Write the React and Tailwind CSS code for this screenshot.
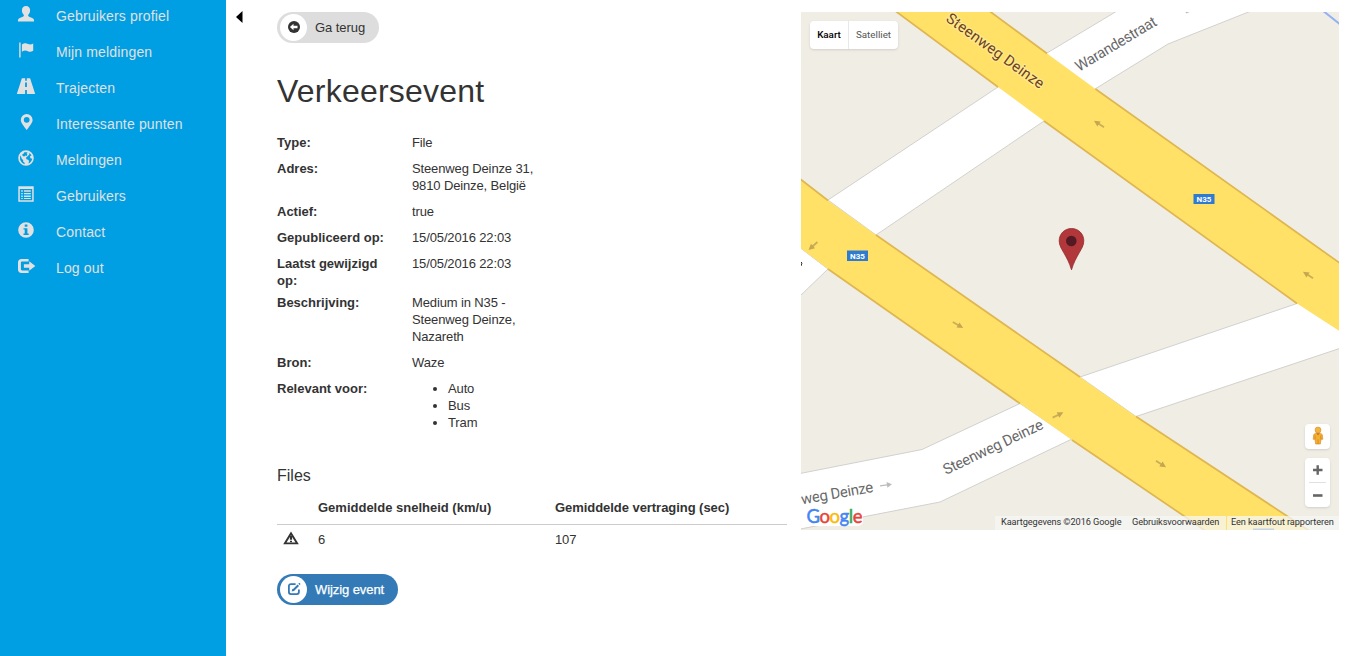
const ICONS = {
  user: (
    <path d="M8 0c2.500 0 4.100 1.700 4.100 4.200 0 1.900-.9 3.600-1.900 4.600v1.300c.2.800 3.900 1.700 4.900 2.500.7.500 1 1.400 1 2.900H-.1c0-1.500.3-2.400 1-2.900 1-.8 4.700-1.700 4.900-2.500V8.800C4.800 7.800 3.900 6.100 3.900 4.200 3.900 1.700 5.500 0 8 0z" />
  ),
  flag: (
    <path d="M1.200.6h1.400v14.800H1.200zM3.900 2.600C6.300.9 8.200 1.200 10 2c1.800.8 3.300.6 5.200-.5v7.300c-1.900 1.100-3.500 1.200-5.300.4-1.800-.8-3.700-1-6 .5z" />
  ),
  road: (
    <path
      fillRule="evenodd"
      d="M3.900.2h3.300v2.600h1.600V.2h3.300L17.200 16H8.900v-4H7.100v4H-1.200zM7.100 4.500v4.600h1.800V4.500z"
    />
  ),
  marker: (
    <path
      fillRule="evenodd"
      d="M8.700 0a5.900 5.900 0 0 1 5.900 5.900c0 3.100-3.400 6.400-5.900 10.100C6.200 12.300 2.800 9 2.800 5.900A5.900 5.900 0 0 1 8.700 0zm0 2.900a2.900 2.900 0 1 0 0 5.800 2.900 2.900 0 0 0 0-5.800z"
    />
  ),
  globe: (
    <path
      fillRule="evenodd"
      d="M8 .2a7.800 7.800 0 1 1 0 15.600A7.800 7.800 0 0 1 8 .2zM2.600 5.200C1.800 7 1.800 9 2.600 10.800c.9 1.900 2.400 3.100 4.200 3.500l-.3-1.600-1.400-1.300.1-1.500-1.300-1-.8-1.800zM6.300 2.300l-.8 1.500-1.300.6.500 1.600 1.500.6 1.200-1 1.100.5.900-1.300-.7-1.200.9-1.400zM10.900 2.900l.5 1.500-1.500 1.700-1.800 1.300.3 1.800 1.800.5.800 1.200-.5 2.600c2-.8 3.400-2.600 3.700-4.700l-1.700-.5-.6-1.700 1.600-1.300c-.6-1-1.500-1.900-2.600-2.400z"
    />
  ),
  list: (
    <path
      fillRule="evenodd"
      d="M.3.300h15.400v15.400H.3zM1.800 2.900v11.300h12.400V2.900zM3.200 4.200h1.600v1.500H3.200zm2.800 0h6.800v1.500H6zm-2.800 2.700h1.600v1.400H3.200zm2.800 0h6.800v1.400H6zm-2.800 2.600h1.600v1.400H3.200zm2.800 0h6.800v1.400H6zm-2.800 2.500h1.600v1.100H3.200zm2.800 0h6.800v1.100H6z"
    />
  ),
  info: (
    <path
      fillRule="evenodd"
      d="M8 .2a7.800 7.800 0 1 1 0 15.600A7.800 7.800 0 0 1 8 .2zM6.700 2.600v2.200h2.700V2.600zM5.500 6.300v1.300h1.200v4H5.500V13h5.200v-1.400H9.400V6.300z"
    />
  ),
  logout: (
    <path d="M3.400 1h7.200v2.600H4.200c-.9 0-1.300.4-1.300 1.300v6.200c0 .9.4 1.300 1.300 1.300h6.400V15H3.400C1.400 15 0 13.600 0 11.600V4.400C0 2.400 1.400 1 3.400 1zM11.200 3.200 17.300 8l-6.100 4.800V9.800H5.900V6.200h5.300z" />
  ),
};

function Icon({ name, className }) {
  return (
    <svg viewBox="0 0 16 16" fill="currentColor" className={`overflow-visible ${className}`}>
      {ICONS[name]}
    </svg>
  );
}

const NAV = [
  ["user", "Gebruikers profiel"],
  ["flag", "Mijn meldingen"],
  ["road", "Trajecten"],
  ["marker", "Interessante punten"],
  ["globe", "Meldingen"],
  ["list", "Gebruikers"],
  ["info", "Contact"],
  ["logout", "Log out"],
];

function Sidebar() {
  return (
    <nav className="h-full w-[226px] shrink-0 bg-[#009ee3] text-[#e1e1e1]">
      {NAV.map(([icon, label]) => (
        <a key={icon} className="flex h-9 pl-[18px] text-[14px] leading-8">
          <Icon name={icon} className="mt-1.5 size-4" />
          <span className="ml-[22px] tracking-[0.150px]">{label}</span>
        </a>
      ))}
    </nav>
  );
}

const DETAILS = [
  ["Type:", "File", "h-[26px]"],
  ["Adres:", "Steenweg Deinze 31, 9810 Deinze, België", "h-[43px]"],
  ["Actief:", "true", "h-[26px]"],
  ["Gepubliceerd op:", "15/05/2016 22:03", "h-[26px]"],
  ["Laatst gewijzigd op:", "15/05/2016 22:03", "h-[39px]"],
  ["Beschrijving:", "Medium in N35 - Steenweg Deinze, Nazareth", "h-[60px]"],
  ["Bron:", "Waze", "h-[26px]"],
];

function Details() {
  return (
    <dl className="mt-6 text-[13px] leading-[17px]">
      {DETAILS.map(([term, value, height]) => (
        <div key={term} className={`flex ${height}`}>
          <dt className="w-[135px] pr-5 font-bold">{term}</dt>
          <dd className="w-[127px] tracking-[-0.130px]">{value}</dd>
        </div>
      ))}
      <div className="flex">
        <dt className="w-[135px] font-bold">Relevant voor:</dt>
        <dd className="tracking-[-0.130px]">
          <ul className="list-disc pl-9">
            <li>Auto</li>
            <li>Bus</li>
            <li>Tram</li>
          </ul>
        </dd>
      </div>
    </dl>
  );
}

function EventPanel() {
  return (
    <section className="w-[510px] shrink-0 pt-3">
      <button className="flex h-[31px] w-[102px] items-center rounded-full bg-[#ddd] pl-[3px] text-[13px]">
        <span className="flex size-[27px] items-center justify-center rounded-full bg-white">
          <svg viewBox="0 0 12 12" className="mb-0.5 size-3">
            <circle cx="6" cy="6" r="6" fill="#333" />
            <path d="M1.900 6 5.500 2.700v2.100h4v2.400h-4v2.100z" fill="#fff" />
          </svg>
        </span>
        <span className="ml-2 tracking-[-0.060px]">Ga terug</span>
      </button>

      <h1 className="mt-[29px] text-[32px] leading-[38px] tracking-[0.220px]">Verkeersevent</h1>
      <Details />

      <h2 className="mt-[35px] text-[16px] leading-5">Files</h2>
      <table className="mt-[5px] w-full table-fixed text-left text-[13px] leading-[17px]">
        <colgroup>
          <col className="w-[41px]" />
          <col className="w-[237px]" />
          <col />
        </colgroup>
        <thead>
          <tr className="h-[33px] border-b border-[#ccc]">
            <th />
            <th>Gemiddelde snelheid (km/u)</th>
            <th className="tracking-[-0.050px]">Gemiddelde vertraging (sec)</th>
          </tr>
        </thead>
        <tbody>
          <tr className="h-[29px]">
            <td className="pl-1.5">
              <svg viewBox="0 0 16 14" className="mb-0.5 h-3.5 w-4">
                <path
                  fill="#333"
                  fillRule="evenodd"
                  d="M8 .5 15.800 13.200H.2zM8 4.200 3.500 11.500h9z"
                />
                <path fill="#333" d="M6.900 5h2.200v3.700H6.900zM7 9.700h2v1.500H7z" />
              </svg>
            </td>
            <td className="pt-0.5">6</td>
            <td className="pt-0.5 tracking-[-0.130px]">107</td>
          </tr>
        </tbody>
      </table>

      <button className="mt-[21px] flex h-[31px] w-[121px] items-center rounded-full bg-[#337ab7] pl-[3px] text-[13px] text-white">
        <span className="flex size-[27px] items-center justify-center rounded-full bg-white">
          <svg viewBox="0 0 14 14" className="mb-0.5 size-3.5" fill="none" stroke="#337ab7">
            <path
              strokeWidth="1.800"
              d="M8.600 2.100H3.900a2 2 0 0 0-2 2v6a2 2 0 0 0 2 2h6a2 2 0 0 0 2-2V7.400"
            />
            <path strokeWidth="2" d="m6 8.500 5.300-5.300" />
            <path fill="#337ab7" stroke="none" d="m5.500 6.700 2 2-2.900.9zM12.300.8l1.300 1.300-1 1-1.300-1.300z" />
          </svg>
        </span>
        <span className="ml-2 tracking-[-0.080px] [-webkit-text-stroke:0.250px_white]">Wijzig event</span>
      </button>
    </section>
  );
}

const ARROWS = [
  [1099, 124, 213],
  [813, 246, 138],
  [1308, 275, 213],
  [958, 325, 30],
  [1058, 415, -26],
  [1161, 464, 33],
];

function RoadMap() {
  return (
    <svg
      viewBox="801 12 538 518"
      className="block h-[518px] w-[538px]"
      fontFamily="Roboto, sans-serif"
    >
      <rect x="801" y="12" width="538" height="518" fill="#efede4" />
      <path d="M1322 10 1341 25" stroke="#92b1f5" strokeWidth="2" />
      <g fill="#fff" stroke="#d3d1cd" strokeWidth="1">
        <path d="M828 200 998 87 1047 53 1117 11H1251L1168 44 1095 89 1044 121 876 235z" />
        <path d="M790 240 828 269 801 295 790 305z" />
        <path d="M790 475.500 922 449.500 1020 403.500 1072 439 940 502 790 531z" />
        <path d="M1080 377 1297 303.500 1350 265V345L1136 416.500z" />
      </g>
      <g fill="#ffe168">
        <path d="M894 10 998 87 1044 121 1297 303.500 1341 332V263.500L1095.500 89 1047 53.500 988 10z" />
        <path d="M799 177.500 828 200.500 876 235 1080 377 1136 416.500 1290 518 1311 532H1207L1184 516 1072 440 1020 403.500 828 269 799 247z" />
      </g>
      <g fill="none" stroke="#dfb650" strokeWidth="1.700">
        <path d="M894 10 998 87M1044 121 1297 303.500M988 10 1047 53.500M1095.500 89 1341 264" />
        <path d="M799 178 828 200.500M876 235 1080 377M1136 416.500 1290 518 1311 532M828 269 1020 403.500M1072 440 1184 516 1207 532" />
      </g>
      {ARROWS.map(([x, y, angle]) => (
        <g key={`${x}-${y}`} transform={`translate(${x} ${y}) rotate(${angle})`}>
          <path d="M-6 0H3" stroke="#c9ae58" strokeWidth="1.800" />
          <path d="M0-3 6 0 0 3z" fill="#c4a750" />
        </g>
      ))}
      <g transform="translate(886 485) rotate(-8)">
        <path d="M-6 0H3" stroke="#bbb" strokeWidth="1.400" />
        <path d="M1-3 6 0 1 3z" fill="#bbb" />
      </g>
      <path d="m1184.500 11 5 1-3 1.500z" fill="#bbb" />
      <path d="m801 262 1 1-1 3" stroke="#333" fill="none" />
      <g
        fontSize="15"
        stroke="#fff"
        strokeWidth="2.500"
        strokeLinejoin="round"
        paintOrder="stroke"
      >
        <text
          transform="translate(945 20.500) rotate(36)"
          fill="#6c421f"
          stroke="#ffe98f"
          textLength="117"
        >
          Steenweg Deinze
        </text>
        <text transform="translate(1079 72) rotate(-31)" fill="#696969" textLength="92">
          Warandestraat
        </text>
        <text transform="translate(946 475) rotate(-25.500)" fill="#696969" textLength="109">
          Steenweg Deinze
        </text>
        <text transform="translate(802 504.500) rotate(-10)" fill="#696969" textLength="73">
          weg Deinze
        </text>
      </g>
      <g fontSize="8" fontWeight="700" fill="#fff" textAnchor="middle">
        <rect x="1193.500" y="194" width="21" height="10" fill="#2f7bd0" />
        <text x="1204" y="202">N35</text>
        <rect x="847" y="250.500" width="21" height="10.500" fill="#2f7bd0" />
        <text x="857.500" y="258.700">N35</text>
        <rect x="1253" y="528.500" width="21" height="10" fill="#2f6fb0" />
      </g>
      <path
        d="M1071.500 228.500c7 0 12.300 5.400 12.300 12.300 0 4.500-2.300 8-4.600 12-2.800 5-5.500 9.500-7.700 17-2.200-7.500-4.900-12-7.700-17-2.300-4-4.600-7.500-4.600-12 0-6.900 5.300-12.300 12.300-12.300z"
        fill="#b1373a"
        stroke="#94292d"
        strokeWidth=".8"
      />
      <circle cx="1071.300" cy="241" r="5.300" fill="#531a23" />
      <rect x="806" y="509" width="57" height="17" rx="5" fill="#fff" />
      <text
        x="806.500"
        y="522.500"
        fontFamily="Lato, sans-serif"
        fontSize="18.500"
        textLength="56"
        strokeWidth=".5"
      >
        <tspan fill="#4285f4" stroke="#4285f4">G</tspan>
        <tspan fill="#ea4335" stroke="#ea4335">o</tspan>
        <tspan fill="#fbbc05" stroke="#fbbc05">o</tspan>
        <tspan fill="#4285f4" stroke="#4285f4">g</tspan>
        <tspan fill="#34a853" stroke="#34a853">l</tspan>
        <tspan fill="#ea4335" stroke="#ea4335">e</tspan>
      </text>
    </svg>
  );
}

function MapPanel() {
  return (
    <section className="relative ml-3.5 mt-3 h-[518px] w-[538px] shrink-0 overflow-hidden font-[Roboto,sans-serif]">
      <RoadMap />
      <div className="absolute left-[9px] top-[9px] flex h-7 w-[88px] rounded-sm bg-white text-center text-[9.800px] leading-7 shadow">
        <div className="w-[39px] border-r border-[#e8e8e8] font-medium text-black">Kaart</div>
        <div className="flex-1 text-[#565656]">Satelliet</div>
      </div>
      <div className="absolute right-[9px] top-[412px] flex h-[25px] w-[25px] justify-center rounded-sm bg-white pt-0.5 shadow">
        <svg viewBox="0 0 12 20" className="h-[19px] w-3">
          <path
            d="M3.500 7.500h5l2 1.500.6 5H9.200l-.7 5h-5l-.7-5H.9L1.500 9z"
            fill="#f4b02f"
            stroke="#cf8425"
            strokeWidth=".6"
          />
          <path d="m4 7.500 2 2.300 2-2.300z" fill="#d5642b" />
          <path d="M6 14v5M3 10v4m6-4v4" stroke="#c77d22" strokeWidth=".7" />
          <circle cx="6" cy="4.200" r="3.100" fill="#f4b43b" stroke="#cf8b25" strokeWidth=".6" />
        </svg>
      </div>
      <div className="absolute right-[9px] top-[446px] flex h-[49px] w-[25px] flex-col items-center rounded-sm bg-white shadow">
        <svg viewBox="0 0 25 24" className="h-6 w-full" stroke="#666" strokeWidth="2.400">
          <path d="M8 12h9.500M12.700 7.300v9.500" />
        </svg>
        <div className="h-px w-[17px] shrink-0 bg-[#e1e1e1]" />
        <svg viewBox="0 0 25 24" className="h-6 w-full" stroke="#666" strokeWidth="2.600">
          <path d="M8 12.500h9.500" />
        </svg>
      </div>
      <div className="absolute bottom-0 right-0 flex h-3.5 whitespace-nowrap text-[9.200px] leading-[12px] text-[#333]">
        <span className="w-[137px] bg-[#f5f5f5]/75 pl-[6px] tracking-[-0.080px]">Kaartgegevens ©2016 Google</span>
        <span className="w-[94px] bg-[#f5f5f5]/75 tracking-[-0.100px]">Gebruiksvoorwaarden</span>
        <span className="ml-px w-[112px] bg-[#f5f5f5]/75 pl-[4px] tracking-[-0.080px]">Een kaartfout rapporteren</span>
      </div>
    </section>
  );
}

export default function App() {
  return (
    <div className="flex h-[656px] w-full overflow-hidden bg-white font-['Liberation_Sans',Arial,sans-serif] text-[#333]">
      <Sidebar />
      <div className="w-[51px] shrink-0 pl-[9px] pt-[11px]">
        <svg viewBox="0 0 8 12" className="h-3 w-2">
          <path d="M7.500 0v12L1 6z" fill="#000" />
        </svg>
      </div>
      <EventPanel />
      <MapPanel />
    </div>
  );
}
